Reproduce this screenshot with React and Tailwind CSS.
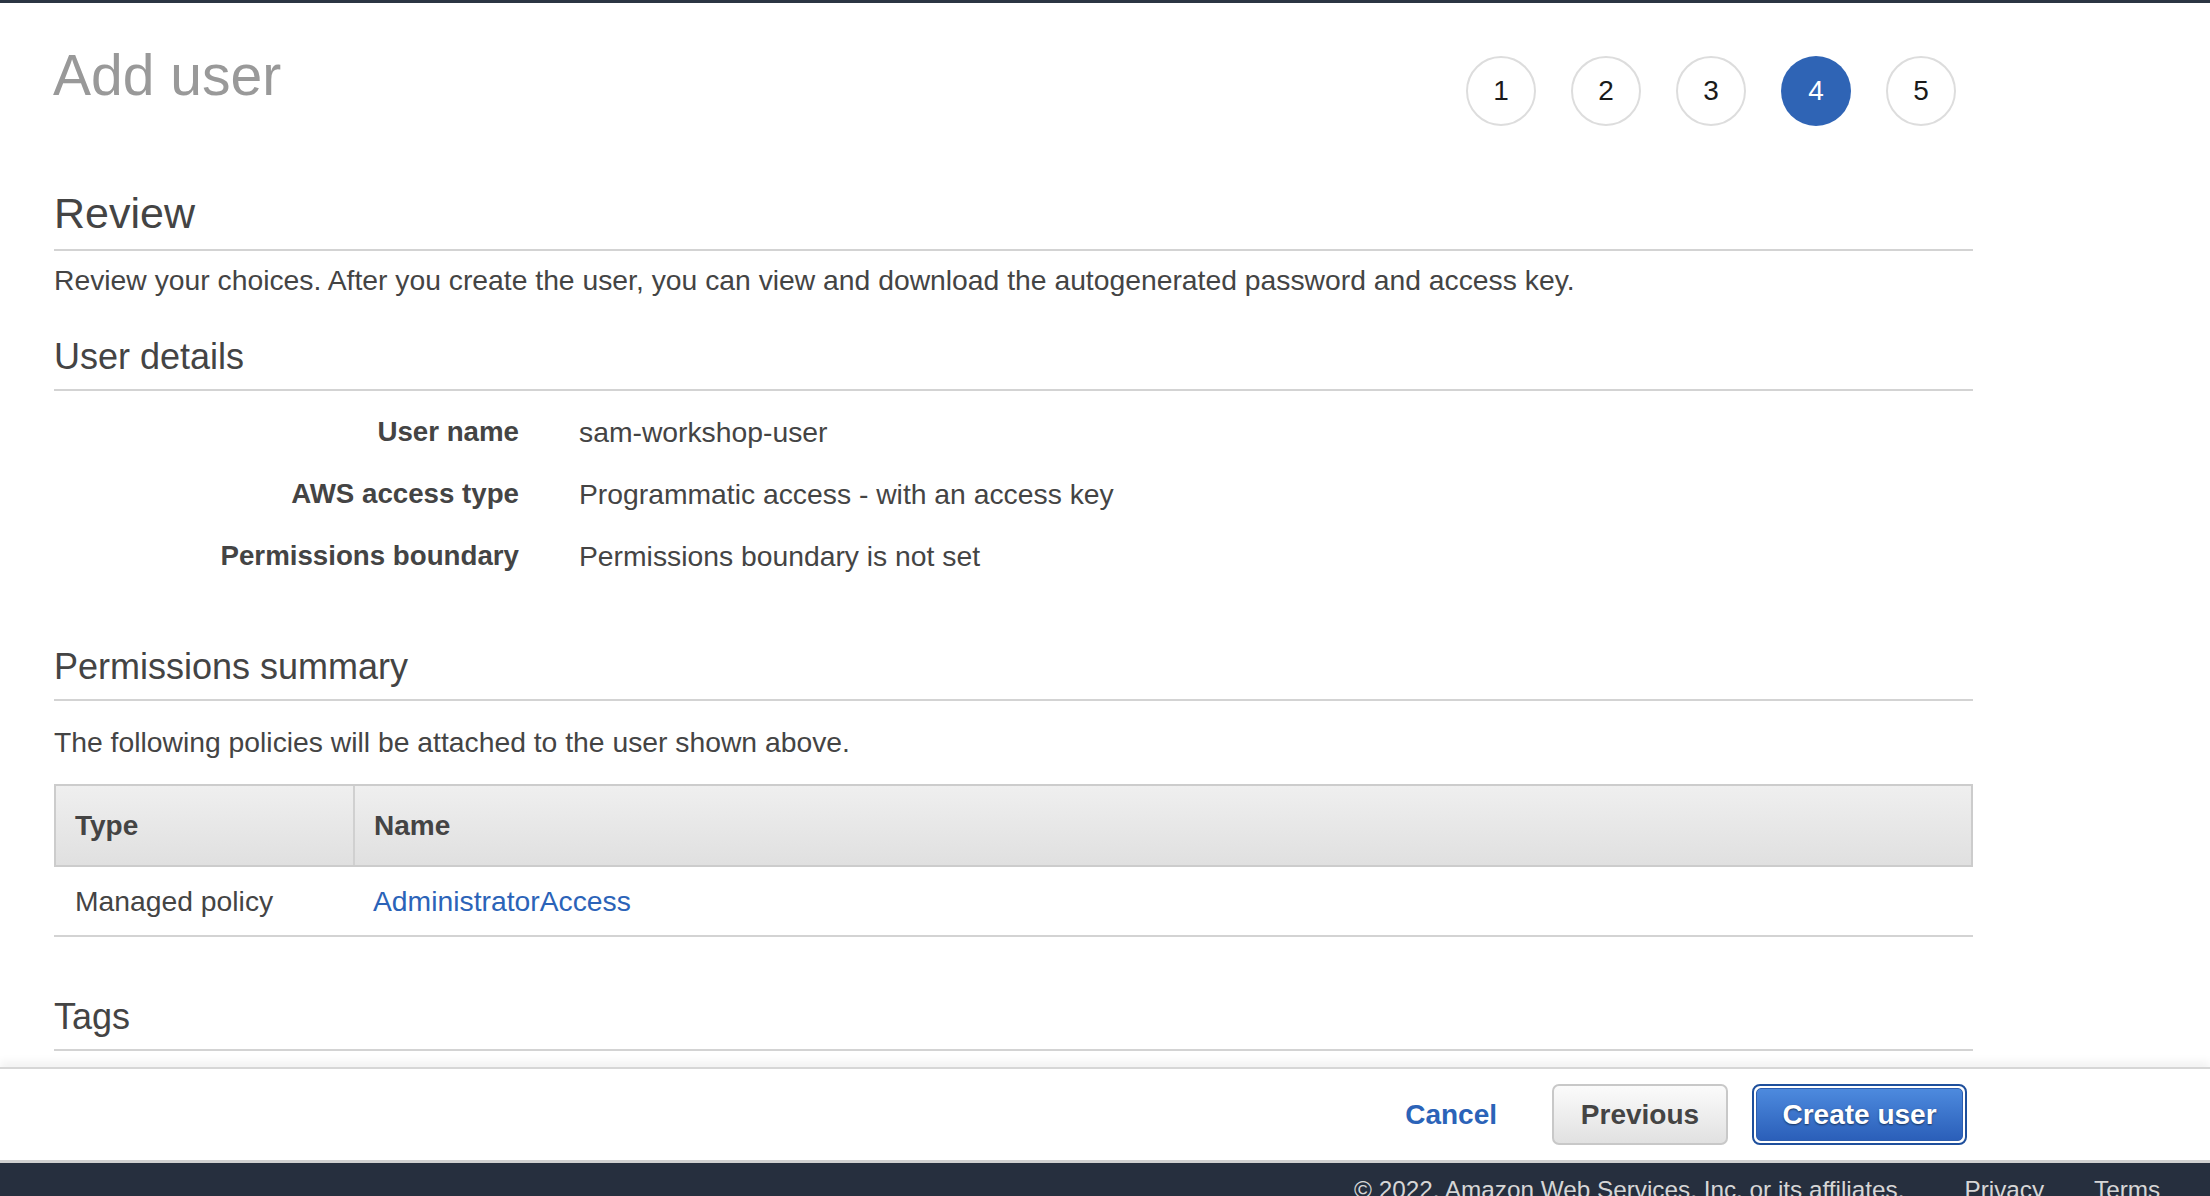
import React from "react";

const font = { fontFamily: '"Liberation Sans", Arial, Helvetica, sans-serif' };

function Step({ n, active }) {
  return (
    <div
      className={
        active
          ? "w-[70px] h-[70px] rounded-full bg-[#2f64b5] text-white flex items-center justify-center text-[28px]"
          : "w-[70px] h-[70px] rounded-full border-2 border-[#dddddd] bg-white text-[#1a1a1a] flex items-center justify-center text-[28px]"
      }
    >
      {n}
    </div>
  );
}

function Row({ label, value }) {
  return (
    <div className="flex py-[13px] leading-[36px]">
      <div className="w-[465px] text-right font-bold text-[#444] text-[27.7px]">{label}</div>
      <div className="ml-[60px] text-[#444] text-[28.3px]">{value}</div>
    </div>
  );
}

export default function App() {
  return (
    <div className="w-[2210px] h-[1196px] overflow-hidden bg-white flex flex-col" style={font}>
      <div className="h-[3px] bg-[#2b3543] shrink-0" />
      <div className="ml-[54px] w-[1919px] flex flex-col text-[#444]">
        <div className="flex justify-between items-start">
          <h1 className="mt-[41px] h-[62px] leading-[62px] text-[57px] text-[#999] -ml-[1px]">Add user</h1>
          <div className="mt-[53px] mr-[17px] flex gap-[35px]">
            <Step n={1} />
            <Step n={2} />
            <Step n={3} />
            <Step n={4} active />
            <Step n={5} />
          </div>
        </div>

        <h2 className="mt-[62px] text-[43px] leading-[50px] pb-[11px] border-b-2 border-[#d3d3d3]">Review</h2>
        <p className="mt-[11px] text-[28.3px] leading-[36px]">
          Review your choices. After you create the user, you can view and download the autogenerated password and access key.
        </p>

        <h3 className="mt-[37px] text-[36px] leading-[44px] pb-[10px] border-b-2 border-[#d3d3d3]">User details</h3>
        <div className="mt-[10px] flex flex-col">
          <Row label="User name" value="sam-workshop-user" />
          <Row label="AWS access type" value="Programmatic access - with an access key" />
          <Row label="Permissions boundary" value="Permissions boundary is not set" />
        </div>

        <h3 className="mt-[58px] text-[36px] leading-[44px] pb-[10px] border-b-2 border-[#d3d3d3]">Permissions summary</h3>
        <p className="mt-[23px] text-[28.3px] leading-[36px]">The following policies will be attached to the user shown above.</p>

        <div className="mt-[24px] flex flex-col text-[28.3px]">
          <div className="flex h-[83px] border-2 border-[#cccccc] bg-gradient-to-b from-[#efefef] to-[#e0e0e0] font-bold text-[28px]">
            <div className="w-[299px] pl-[19px] flex items-center border-r-2 border-[#d0d0d0]">Type</div>
            <div className="flex-1 pl-[19px] flex items-center">Name</div>
          </div>
          <div className="flex h-[70px] border-b-2 border-[#d3d3d3]">
            <div className="w-[301px] pl-[21px] flex items-center">Managed policy</div>
            <div className="flex-1 pl-[18px] flex items-center text-[#2b63b8]">AdministratorAccess</div>
          </div>
        </div>

        <h3 className="mt-[58px] text-[36px] leading-[44px] pb-[10px] border-b-2 border-[#d3d3d3]">Tags</h3>
      </div>

      <div className="mt-[16px] shrink-0 h-[96px] border-t-2 border-b-[3px] border-t-[#d6d6d6] border-b-[#d0d0d0] bg-white shadow-[0_-6px_8px_rgba(0,0,0,0.05)] flex items-center justify-end pr-[243px] gap-[24px]">
        <button className="mr-[31px] text-[28px] font-bold text-[#2b63b8]">Cancel</button>
        <button className="w-[176px] h-[61px] rounded-[7px] border-2 border-[#c8c8c8] bg-gradient-to-b from-[#fbfbfb] to-[#e1e1e1] text-[28px] font-bold text-[#444]">
          Previous
        </button>
        <div className="w-[215px] h-[61px] rounded-[8px] border-2 border-[#1e4f9c] bg-white p-[2px]">
          <button className="w-full h-full rounded-[5px] border border-[#2d5dae] bg-gradient-to-b from-[#4d8ade] to-[#2b5fb9] text-[28px] font-bold text-white [text-shadow:0_1px_2px_rgba(0,0,0,0.55)]">
            Create user
          </button>
        </div>
      </div>

      <div className="flex-1 bg-[#262f3e] text-[#d6d6d6] text-[24.3px] leading-[24px] pt-[15px] flex pl-[1354px] gap-[66px] whitespace-nowrap">
        <span>© 2022, Amazon Web Services, Inc. or its affiliates.</span>
        <span className="-ml-[6px]">Privacy</span>
        <span className="-ml-[16px]">Terms</span>
        <span>Cookie preferences</span>
      </div>
    </div>
  );
}
